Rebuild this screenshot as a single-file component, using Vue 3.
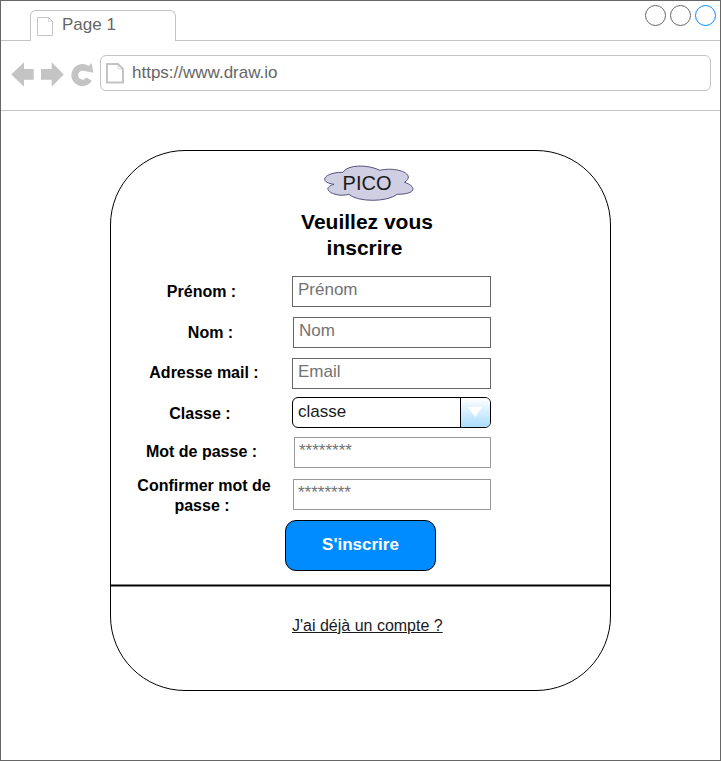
<script setup>
const fields = [
  { key: 'prenom', lines: ['Prénom :'], value: 'Prénom' },
  { key: 'nom', lines: ['Nom :'], value: 'Nom' },
  { key: 'mail', lines: ['Adresse mail :'], value: 'Email' },
  { key: 'classe', lines: ['Classe :'], value: 'classe', select: true },
  { key: 'mdp', lines: ['Mot de passe :'], value: '********', secret: true },
  { key: 'confirm', lines: ['Confirmer mot de', 'passe :'], value: '********', secret: true },
]
</script>

<template>
  <div class="window">
    <header class="tabbar">
      <div class="tab">
        <svg class="tab-icon" width="17" height="20" viewBox="0 0 17 20" fill="none" stroke="#c4c4c4">
          <path d="M.5.5H11.5L15.500 4.500V18.5H.5Z" />
          <path d="M11.500.5V4.500H15.500" stroke-opacity=".6" />
        </svg>
        <span>Page 1</span>
      </div>
      <svg class="controls" width="73" height="23" viewBox="0 0 73 23" fill="none" stroke="#666">
        <circle cx="11.5" cy="11.5" r="10" />
        <circle cx="36.5" cy="11.5" r="10" />
        <circle cx="61.5" cy="11.5" r="10" stroke="#008cff" />
      </svg>
    </header>

    <nav class="toolbar">
      <svg class="nav-icons" width="84" height="26" viewBox="0 0 84 26" fill="#c4c4c4">
        <path d="M.3 13.500 13 1.300V8H22.700V18.700H13V25.700Z" />
        <path d="M52.700 13.500 40.700 1.300V8H30V18.700H40.700V25.700Z" />
        <path d="M77.500 5 80.500 2 82.500 11.700 72.500 9.800A4.400 4.400 0 1 0 75.300 16.500L80.800 19.800A11 11 0 1 1 77.500 5Z" />
      </svg>
      <div class="address">
        <svg width="18" height="21" viewBox="0 0 18 21" fill="none" stroke="#c4c4c4">
          <path d="M1 1H12L17 6V19.500H1Z" stroke-width="2" />
          <path d="M12 1V6H17" stroke-opacity=".6" />
        </svg>
        <span>https://www.draw.io</span>
      </div>
    </nav>

    <main class="card">
      <div class="logo">
        <svg class="cloud" width="100" height="40" viewBox="0 0 100 40">
          <path
            transform="translate(1.300 .3) scale(.985 1)"
            d="M25 10C5 10 0 20 16 22C0 26.400 18 36 31 32C40 40 70 40 80 32C100 32 100 24 87.500 20C100 12 80 4 62.500 8C50 2 30 2 25 10Z"
            fill="#d0cee2" stroke="#56517e"
          />
        </svg>
        <span class="logo-text">PICO</span>
      </div>
      <h1>
        <span>Veuillez vous</span>
        <span>inscrire</span>
      </h1>

      <form class="form" @submit.prevent>
        <div v-for="f in fields" :key="f.key" class="row" :class="f.key">
          <div class="label"><span v-for="line in f.lines" :key="line">{{ line }}</span></div>
          <div class="field" :class="{ select: f.select, secret: f.secret }">
            <span class="value">{{ f.value }}</span>
            <span v-if="f.select" class="drop">
              <svg width="14" height="10" viewBox="0 0 14 10"><path d="M0 0H14L7 10Z" fill="#fff" /></svg>
            </span>
          </div>
        </div>
        <button class="submit" type="submit">S'inscrire</button>
      </form>

      <div class="divider"></div>
      <a class="login">J'ai déjà un compte ?</a>
    </main>
  </div>
</template>

<style>
body {
  margin: 0;
  background: #fff;
}
</style>

<style scoped>
* {
  box-sizing: border-box;
}
.window {
  width: 721px;
  height: 761px;
  border: 1px solid #666;
  font-family: "Liberation Sans", Arial, sans-serif;
  font-size: 17px;
  line-height: 20px;
  color: #666;
  overflow: hidden;
}
.tabbar {
  display: flex;
  justify-content: space-between;
  height: 40px;
  padding: 9px 0 0 29px;
  border-bottom: 1px solid #c4c4c4;
}
.tab {
  display: flex;
  gap: 8px;
  width: 146px;
  height: 31px;
  padding: 4px 0 0 6px;
  border: 1px solid #c4c4c4;
  border-bottom: 0;
  border-radius: 6px 6px 0 0;
  background: #fff;
}
.tab-icon {
  margin-top: 2px;
}
.controls {
  margin: -6px 3px 0 0;
}
.toolbar {
  display: flex;
  height: 70px;
  padding: 14px 9px 0 10px;
  border-bottom: 1px solid #c4c4c4;
}
.nav-icons {
  margin: 6px 5px 0 0;
}
.address {
  display: flex;
  flex: 1;
  gap: 8px;
  height: 36px;
  padding: 7px 0 0 5px;
  border: 1px solid #c4c4c4;
  border-radius: 6px;
}
.card {
  display: flex;
  flex-direction: column;
  width: 501px;
  height: 541px;
  margin: 39px 0 0 109px;
  border: 1px solid #000;
  border-radius: 75px;
  color: #000;
}
.logo {
  display: grid;
  width: 100px;
  height: 40px;
  margin: 11px 0 0 206px;
  place-items: center;
}
.cloud,
.logo-text {
  grid-area: 1 / 1;
}
.logo-text {
  padding-top: 2px;
  font-size: 20px;
  line-height: 24px;
  color: #1a1a1a;
}
h1 {
  display: flex;
  flex-direction: column;
  align-items: center;
  width: 160px;
  margin: 7px 0 0 176px;
  font-size: 21px;
  line-height: 26px;
}
h1 span + span {
  padding-right: 5px;
}
.form {
  display: flex;
  flex-direction: column;
  margin-top: 15px;
}
.row {
  display: flex;
  align-items: center;
  height: 31px;
  margin-bottom: 10px;
}
.label {
  display: flex;
  flex-direction: column;
  align-items: center;
  width: 181px;
  font-size: 16px;
  font-weight: bold;
  white-space: nowrap;
}
.nom .label {
  width: 182px;
  padding-left: 17px;
}
.mail .label {
  padding: 0 0 2px 5px;
}
.classe .label {
  padding: 2px 3px 0 0;
}
.mdp .label {
  width: 183px;
  padding: 0 2px 2px 0;
}
.confirm .label {
  width: 182px;
  padding: 2px 0 0 4px;
}
.label span + span {
  padding-right: 4px;
}
.field {
  display: flex;
  width: 199px;
  height: 31px;
  padding: 3px 0 0 5px;
  border: 1px solid #666;
  color: #737373;
}
.nom .field,
.confirm .field {
  width: 198px;
}
.mdp .field {
  width: 197px;
}
.secret.field {
  padding-left: 4px;
  border-color: #999;
}
.mail {
  margin-bottom: 8px;
}
.classe {
  margin-bottom: 9px;
}
.mdp {
  margin-bottom: 11px;
}
.select {
  justify-content: space-between;
  padding-top: 0;
  border-color: #000;
  border-radius: 6px;
  color: #1a1a1a;
  overflow: hidden;
}
.select .value {
  margin-top: 4px;
}
.drop {
  display: flex;
  width: 30px;
  height: 29px;
  padding: 9px 0 0 7px;
  border-left: 1px solid #000;
  background: linear-gradient(#fff, #aaddff);
}
.submit {
  width: 151px;
  height: 51px;
  margin-left: 174px;
  padding: 0 0 2px;
  border: 1px solid #000;
  border-radius: 11px;
  background: #008cff;
  color: #fff;
  font: bold 17px/20px "Liberation Sans", Arial, sans-serif;
}
.divider {
  height: 3px;
  margin-top: 13px;
  border: solid #808080;
  border-width: 1px 0;
  background: #000;
}
.login {
  align-self: flex-start;
  margin: 29px 0 0 181px;
  font-size: 16px;
  color: #1a1a1a;
  text-decoration: underline;
}
</style>
